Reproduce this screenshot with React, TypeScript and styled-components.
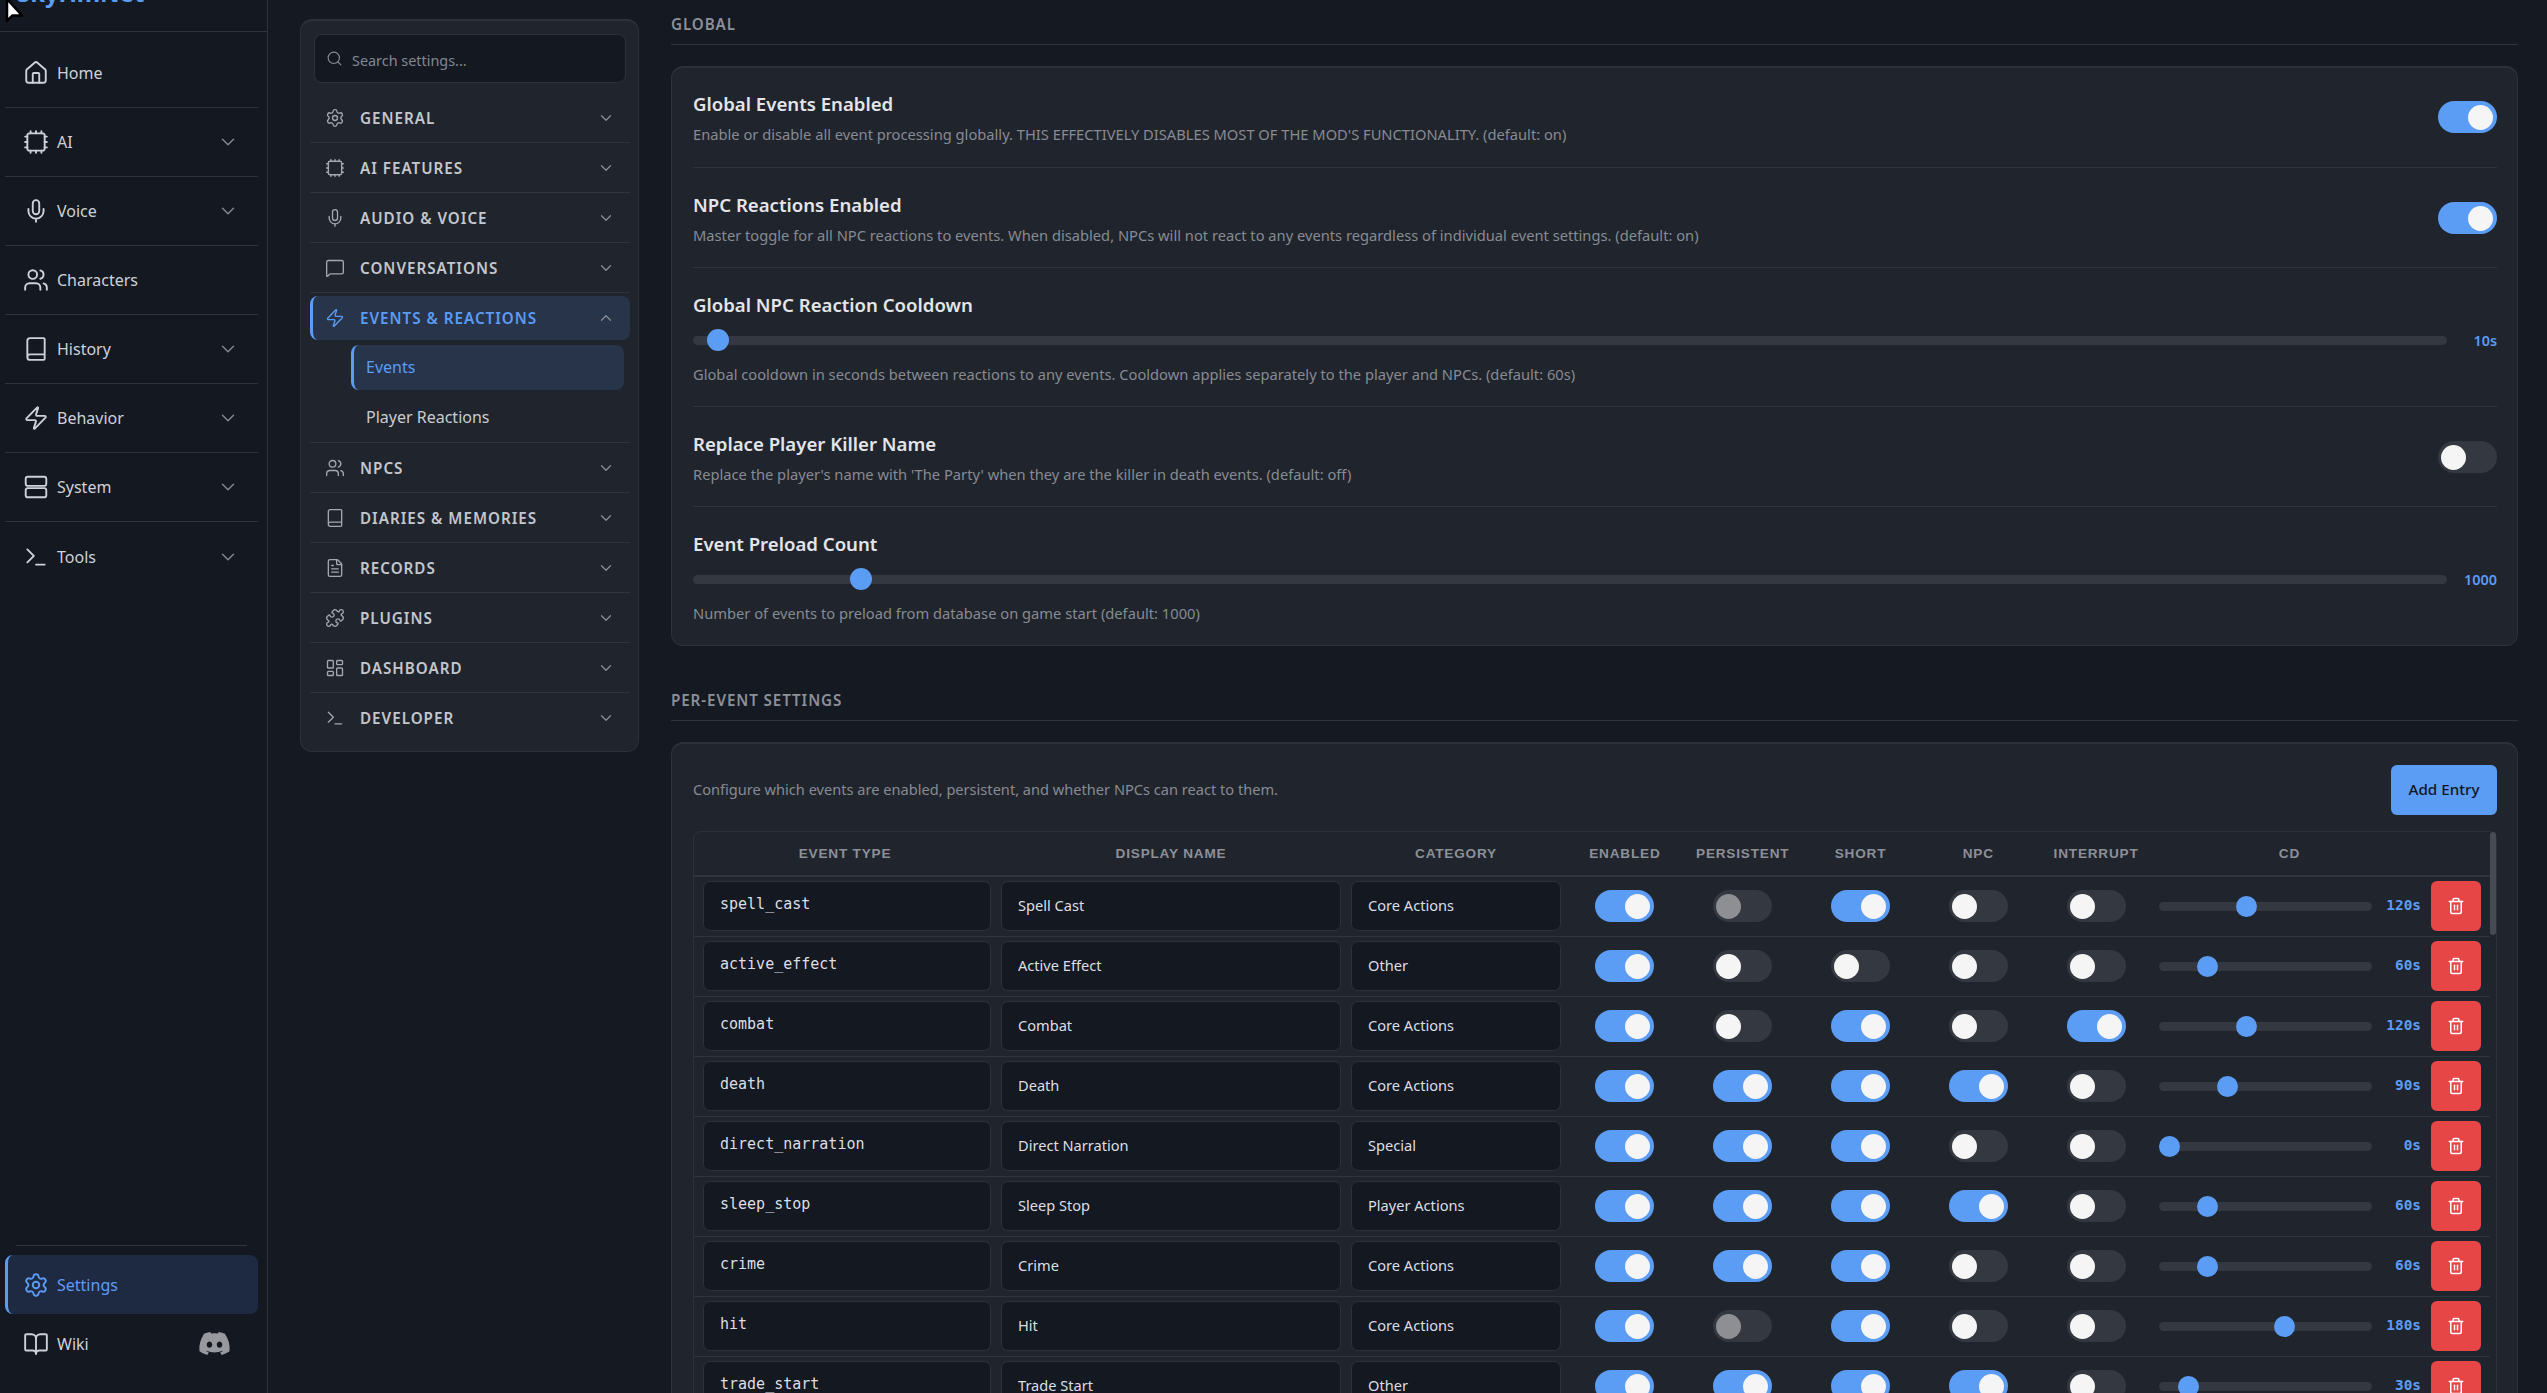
import React from "react";
import styled, { createGlobalStyle } from "styled-components";
import {
  House, Mic, Users, Book, Zap, Terminal, ChevronDown, ChevronUp, Settings, BookOpen, Search,
  MessageSquare, FileText, Puzzle, LayoutDashboard, Trash2,
} from "lucide-react";
import { FaDiscord } from "react-icons/fa";

const SANS = `"Noto Sans", "Open Sans", sans-serif`;
const MONO = `"DejaVu Sans Mono", monospace`;
const BLUE = "#5b9cf5";

const Global = createGlobalStyle`
  html, body { margin: 0; height: 100%; overflow: hidden; background: #141922; }
  * { box-sizing: border-box; }
  #root { height: 100%; }
`;

const Shell = styled.div`
  display: grid;
  grid-template-columns: 268px 1fr;
  height: 100vh;
  overflow: hidden;
  background: #141922;
  font-family: ${SANS};
  color: #d8dbe1;
`;

const Side = styled.aside`
  position: relative;
  display: flex;
  flex-direction: column;
  background: #131821;
  border-right: 1px solid #30343c;
  height: 100%;
`;

const Brand = styled.div`
  height: 32px;
  overflow: hidden;
  border-bottom: 1px solid #30343c;
  padding-left: 17px;
`;

const BrandText = styled.div`
  margin-top: -26px;
  font-size: 24px;
  line-height: 38px;
  font-weight: 700;
  color: ${BLUE};
`;

const Pointer = styled.svg`
  position: absolute;
  left: 4px;
  top: -2px;
  z-index: 5;
`;

const Nav = styled.nav`
  flex: 1;
  padding: 7px 9px 0 5px;
`;

const NavRow = styled.div`
  height: 69px;
  display: flex;
  align-items: center;
  padding-left: 18px;
  gap: 8px;
  font-size: 16px;
  color: #ced1d8;
  border-bottom: 1px solid #30343c;
  &:last-child { border-bottom: none; }
  & > svg { flex: none; }
`;

const NavChevron = styled.span`
  margin-left: auto;
  margin-right: 19px;
  display: flex;
  color: #83878f;
`;

const SideFoot = styled.div`
  padding: 0 9px 20px 5px;
`;

const FootRule = styled.div`
  height: 1px;
  background: #30343c;
  margin: 0 11px 9px;
`;

const SettingsLink = styled.div`
  height: 59px;
  display: flex;
  align-items: center;
  gap: 8px;
  padding-left: 15px;
  font-size: 16px;
  color: ${BLUE};
  background: #1e2a42;
  border-left: 3px solid ${BLUE};
  border-radius: 8px;
`;

const WikiRow = styled.div`
  height: 59px;
  display: flex;
  align-items: center;
  gap: 8px;
  padding: 0 27px 0 18px;
  font-size: 16px;
  color: #ced1d8;
  & > svg:last-child { margin-left: auto; color: #97999e; }
`;

const Main = styled.main`
  display: flex;
  align-items: flex-start;
  gap: 32px;
  padding: 19px 29px 0 32px;
  min-width: 0;
  height: 100%;
  overflow: hidden;
`;

const Panel = styled.div`
  flex: none;
  width: 339px;
  background: #20242c;
  border: 1px solid #2d3139;
  border-top-width: 2px;
  border-radius: 12px;
  padding: 13px 8px 9px 9px;
`;

const SearchBox = styled.label`
  display: flex;
  align-items: center;
  gap: 9px;
  height: 49px;
  margin: 0 4px 10px;
  padding: 0 11px;
  background: #141821;
  border: 1px solid #2d3139;
  border-radius: 8px;
  color: #8a8e96;
`;

const SearchInput = styled.input`
  flex: 1;
  min-width: 0;
  padding: 3px 0 0;
  background: none;
  border: none;
  outline: none;
  font: 14.4px ${SANS};
  color: #d8dbe1;
  &::placeholder { color: #83878f; opacity: 1; }
`;

const Group = styled.div`
  padding: 3px 0 2px;
  border-bottom: 1px solid #30343c;
  &:last-child { border-bottom: none; }
`;

const GroupHead = styled.div<{ $active?: boolean }>`
  height: 44px;
  display: flex;
  align-items: center;
  gap: 15px;
  padding: 0 15px;
  border-radius: 8px;
  font-size: 15.2px;
  font-weight: 600;
  letter-spacing: 1px;
  color: ${(p) => (p.$active ? BLUE : "#c4c7cd")};
  background: ${(p) => (p.$active ? "#27344a" : "transparent")};
  border-left: ${(p) => (p.$active ? `3px solid ${BLUE}` : "none")};
  padding-left: ${(p) => (p.$active ? "12px" : "15px")};
  & > svg { flex: none; color: ${(p) => (p.$active ? BLUE : "#a4a7ae")}; }
`;

const GroupChevron = styled.span`
  margin-left: auto;
  display: flex;
  color: #8c9098;
`;

const SubList = styled.div`
  display: flex;
  flex-direction: column;
  gap: 5px;
  margin: 5px 6px 0 41px;
`;

const SubItem = styled.div<{ $active?: boolean }>`
  height: 45px;
  display: flex;
  align-items: center;
  padding-bottom: 1px;
  padding-left: ${(p) => (p.$active ? "12px" : "15px")};
  font-size: 16px;
  border-radius: 8px;
  color: ${(p) => (p.$active ? BLUE : "#c9ccd2")};
  background: ${(p) => (p.$active ? "#27344a" : "transparent")};
  border-left: ${(p) => (p.$active ? `3px solid ${BLUE}` : "none")};
`;

const Content = styled.div`
  flex: 1;
  min-width: 0;
  margin-top: -5px;
`;

const SectionTitle = styled.h2<{ $gap?: boolean }>`
  margin: ${(p) => (p.$gap ? "44px" : "0")} 0 21px;
  height: 31px;
  padding-bottom: 10px;
  line-height: 20px;
  font-size: 15.2px;
  font-weight: 600;
  letter-spacing: 0.9px;
  color: #8c9098;
  border-bottom: 1px solid #30343c;
`;

const Card = styled.section`
  background: #20242c;
  border: 1px solid #2d3139;
  border-top-width: 2px;
  border-radius: 12px;
  padding: 0 20px 0 21px;
`;

const SettingRow = styled.div`
  padding: 22px 0 19px;
  border-bottom: 1px solid #2f333b;
  &:first-child { padding: 21px 0 20px; }
  &:last-child { border-bottom: none; }
`;

const ToggleRow = styled(SettingRow)`
  display: flex;
  align-items: center;
  justify-content: space-between;
  & > button { margin-bottom: 2px; }
`;

const SettingTitle = styled.div`
  font-size: 18.6px;
  line-height: 30px;
  font-weight: 600;
  color: #e3e5ea;
`;

const SettingDesc = styled.div<{ $afterSlider?: boolean }>`
  margin-top: ${(p) => (p.$afterSlider ? "11px" : "3px")};
  padding-bottom: 1px;
  font-size: 14.7px;
  line-height: 24px;
  color: #878b93;
`;

const SliderLine = styled.div`
  display: flex;
  align-items: center;
  margin-top: 9px;
  height: 22px;
`;

const SliderValue = styled.span`
  flex: none;
  width: 50px;
  text-align: right;
  font-size: 14.4px;
  font-weight: 600;
  color: ${BLUE};
`;

const Range = styled.input<{ $size: number }>`
  flex: 1;
  min-width: 0;
  margin: 0;
  height: ${(p) => p.$size}px;
  appearance: none;
  background: transparent;
  &::-webkit-slider-runnable-track {
    height: 9px;
    border-radius: 5px;
    background: #343841;
  }
  &::-webkit-slider-thumb {
    appearance: none;
    width: ${(p) => p.$size}px;
    height: ${(p) => p.$size}px;
    margin-top: ${(p) => (9 - p.$size) / 2}px;
    border-radius: 50%;
    background: ${BLUE};
    border: none;
  }
`;

const Track = styled.button<{ $on: boolean }>`
  flex: none;
  width: 59px;
  height: 32px;
  padding: 0 4px 0 3px;
  display: flex;
  align-items: center;
  justify-content: ${(p) => (p.$on ? "flex-end" : "flex-start")};
  border: none;
  border-radius: 16px;
  background: ${(p) => (p.$on ? BLUE : "#343841")};
`;

const Knob = styled.span<{ $off?: boolean }>`
  display: block;
  width: 25px;
  height: 25px;
  border-radius: 50%;
  background: ${(p) => (p.$off ? "#8e8f93" : "#f5f5f5")};
`;

const Toolbar = styled.div`
  display: flex;
  align-items: center;
  justify-content: space-between;
  margin-top: 21px;
`;

const ToolbarText = styled.span`
  font-size: 14.6px;
  color: #878b93;
  padding-bottom: 2px;
`;

const AddButton = styled.button`
  width: 106px;
  height: 50px;
  border: none;
  border-radius: 6px;
  background: ${BLUE};
  color: #101722;
  font: 500 15.2px ${SANS};
  padding: 0 0 2px;
`;

const Table = styled.div`
  position: relative;
  margin-top: 16px;
  border: 1px solid #2d3139;
  border-radius: 8px 8px 0 0;
  padding-right: 6px;
`;

const ScrollThumb = styled.div`
  position: absolute;
  top: 0;
  right: 0;
  width: 6px;
  height: 103px;
  border-radius: 3px;
  background: #474b54;
`;

const COLUMNS = "302px 350px 220px repeat(5, 117.8px) 269px 66px";

const HeadRow = styled.div`
  display: grid;
  grid-template-columns: ${COLUMNS};
  align-items: center;
  height: 45px;
  border-bottom: 2px solid #30343c;
`;

const HeadCell = styled.div`
  text-align: center;
  font: 700 13.6px "Liberation Sans", Arial, sans-serif;
  letter-spacing: 0.8px;
  color: #8c9098;
`;

const BodyRow = styled.div`
  display: grid;
  grid-template-columns: ${COLUMNS};
  height: 60px;
  padding: 4px 0 5px;
  border-bottom: 1px solid #30343c;
`;

const FieldCell = styled.div<{ $first?: boolean }>`
  padding: 0 5px 0 ${(p) => (p.$first ? "9px" : "5px")};
`;

const Field = styled.input<{ $mono?: boolean }>`
  display: block;
  width: 100%;
  height: 50px;
  padding: ${(p) => (p.$mono ? "0 16px 4px" : "0 16px 2px")};
  background: #141821;
  border: 1px solid #2d3139;
  border-radius: 7px;
  outline: none;
  color: #dcdfe4;
  font-family: ${(p) => (p.$mono ? MONO : SANS)};
  font-size: ${(p) => (p.$mono ? "15px" : "14.6px")};
`;

const SwitchCell = styled.div`
  display: flex;
  align-items: center;
  justify-content: center;
`;

const CdCell = styled.div`
  display: flex;
  align-items: center;
  padding: 0 3px 0 4px;
`;

const CdValue = styled.span`
  flex: none;
  width: 49px;
  text-align: right;
  padding-bottom: 2px;
  font: 700 14.4px ${MONO};
  color: ${BLUE};
`;

const ActionCell = styled.div`
  padding-left: 7px;
`;

const DeleteButton = styled.button`
  display: flex;
  align-items: center;
  justify-content: center;
  width: 50px;
  height: 50px;
  border: none;
  border-radius: 6px;
  background: #e74646;
  color: #fff;
`;

const CpuIcon = ({ size }: { size: number }) => (
  <svg width={size} height={size} viewBox="0 0 24 24" fill="none" stroke="currentColor" strokeWidth="1.75" strokeLinecap="round" strokeLinejoin="round">
    <rect x="4" y="4" width="16" height="16" rx="2" />
    <path d="M12 20v2M12 2v2M17 20v2M17 2v2M2 12h2M2 17h2M2 7h2M20 12h2M20 17h2M20 7h2M7 20v2M7 2v2" />
  </svg>
);

const ServerIcon = ({ size }: { size: number }) => (
  <svg width={size} height={size} viewBox="0 0 24 24" fill="none" stroke="currentColor" strokeWidth="1.75" strokeLinecap="round" strokeLinejoin="round">
    <rect x="2.5" y="2.5" width="19" height="8.5" rx="2" />
    <rect x="2.5" y="13" width="19" height="8.5" rx="2" />
  </svg>
);

const Toggle = ({ state }: { state: string }) => (
  <Track $on={state === "1"} role="switch" aria-checked={state === "1"} aria-label="toggle">
    <Knob $off={state === "d"} />
  </Track>
);

const ICON = { size: 26, strokeWidth: 1.75 };
const navItems: [string, React.ReactNode, boolean][] = [
  ["Home", <House {...ICON} />, false],
  ["AI", <CpuIcon size={26} />, true],
  ["Voice", <Mic {...ICON} />, true],
  ["Characters", <Users {...ICON} />, false],
  ["History", <Book {...ICON} />, true],
  ["Behavior", <Zap {...ICON} />, true],
  ["System", <ServerIcon size={26} />, true],
  ["Tools", <Terminal {...ICON} />, true],
];

const SM = { size: 20, strokeWidth: 1.6 };
const before: [string, React.ReactNode][] = [
  ["GENERAL", <Settings {...SM} />],
  ["AI FEATURES", <CpuIcon size={20} />],
  ["AUDIO & VOICE", <Mic {...SM} />],
  ["CONVERSATIONS", <MessageSquare {...SM} />],
];
const after: [string, React.ReactNode][] = [
  ["NPCS", <Users {...SM} />],
  ["DIARIES & MEMORIES", <Book {...SM} />],
  ["RECORDS", <FileText {...SM} />],
  ["PLUGINS", <Puzzle {...SM} />],
  ["DASHBOARD", <LayoutDashboard {...SM} />],
  ["DEVELOPER", <Terminal {...SM} />],
];

// flags, one per switch: enabled, persistent, short, npc, interrupt (d = off and greyed)
const events: [string, string, string, string, number][] = [
  ["spell_cast", "Spell Cast", "Core Actions", "1d100", 120],
  ["active_effect", "Active Effect", "Other", "10000", 60],
  ["combat", "Combat", "Core Actions", "10101", 120],
  ["death", "Death", "Core Actions", "11110", 90],
  ["direct_narration", "Direct Narration", "Special", "11100", 0],
  ["sleep_stop", "Sleep Stop", "Player Actions", "11110", 60],
  ["crime", "Crime", "Core Actions", "11100", 60],
  ["hit", "Hit", "Core Actions", "1d100", 180],
  ["trade_start", "Trade Start", "Other", "11110", 30],
];

const heads = ["EVENT TYPE", "DISPLAY NAME", "CATEGORY", "ENABLED", "PERSISTENT", "SHORT", "NPC", "INTERRUPT", "CD", ""];

const GroupRow = ({ label, icon }: { label: string; icon: React.ReactNode }) => (
  <Group>
    <GroupHead>
      {icon}
      {label}
      <GroupChevron><ChevronDown size={18} strokeWidth={1.6} /></GroupChevron>
    </GroupHead>
  </Group>
);

export default function App() {
  return (
    <Shell>
      <Global />
      <Side>
        <Pointer width="22" height="30" viewBox="0 0 22 30">
          <path d="M3 1v22l5.5-5.5H18z" fill="#fff" stroke="#000" strokeWidth="2.5" strokeLinejoin="round" />
        </Pointer>
        <Brand><BrandText>SkyrimNet</BrandText></Brand>
        <Nav>
          {navItems.map(([label, icon, chevron]) => (
            <NavRow key={label}>
              {icon}
              {label}
              {chevron && <NavChevron><ChevronDown size={22} strokeWidth={1.6} /></NavChevron>}
            </NavRow>
          ))}
        </Nav>
        <SideFoot>
          <FootRule />
          <SettingsLink><Settings {...ICON} />Settings</SettingsLink>
          <WikiRow><BookOpen {...ICON} />Wiki<FaDiscord size={33} /></WikiRow>
        </SideFoot>
      </Side>
      <Main>
        <Panel>
          <SearchBox>
            <Search size={17} strokeWidth={1.6} />
            <SearchInput placeholder="Search settings..." />
          </SearchBox>
          {before.map(([l, i]) => <GroupRow key={l} label={l} icon={i} />)}
          <Group>
            <GroupHead $active>
              <Zap {...SM} />
              EVENTS &amp; REACTIONS
              <GroupChevron><ChevronUp size={18} strokeWidth={1.6} /></GroupChevron>
            </GroupHead>
            <SubList>
              <SubItem $active>Events</SubItem>
              <SubItem>Player Reactions</SubItem>
            </SubList>
          </Group>
          {after.map(([l, i]) => <GroupRow key={l} label={l} icon={i} />)}
        </Panel>
        <Content>
          <SectionTitle>GLOBAL</SectionTitle>
          <Card>
            <ToggleRow>
              <div>
                <SettingTitle>Global Events Enabled</SettingTitle>
                <SettingDesc>Enable or disable all event processing globally. THIS EFFECTIVELY DISABLES MOST OF THE MOD'S FUNCTIONALITY. (default: on)</SettingDesc>
              </div>
              <Toggle state="1" />
            </ToggleRow>
            <ToggleRow>
              <div>
                <SettingTitle>NPC Reactions Enabled</SettingTitle>
                <SettingDesc>Master toggle for all NPC reactions to events. When disabled, NPCs will not react to any events regardless of individual event settings. (default: on)</SettingDesc>
              </div>
              <Toggle state="1" />
            </ToggleRow>
            <SettingRow>
              <SettingTitle>Global NPC Reaction Cooldown</SettingTitle>
              <SliderLine>
                <Range $size={22} type="range" min={0} max={1200} defaultValue={10} aria-label="Global NPC Reaction Cooldown" />
                <SliderValue>10s</SliderValue>
              </SliderLine>
              <SettingDesc $afterSlider>Global cooldown in seconds between reactions to any events. Cooldown applies separately to the player and NPCs. (default: 60s)</SettingDesc>
            </SettingRow>
            <ToggleRow>
              <div>
                <SettingTitle>Replace Player Killer Name</SettingTitle>
                <SettingDesc>Replace the player's name with 'The Party' when they are the killer in death events. (default: off)</SettingDesc>
              </div>
              <Toggle state="0" />
            </ToggleRow>
            <SettingRow>
              <SettingTitle>Event Preload Count</SettingTitle>
              <SliderLine>
                <Range $size={22} type="range" min={100} max={10000} defaultValue={1000} aria-label="Event Preload Count" />
                <SliderValue>1000</SliderValue>
              </SliderLine>
              <SettingDesc $afterSlider>Number of events to preload from database on game start (default: 1000)</SettingDesc>
            </SettingRow>
          </Card>
          <SectionTitle $gap>PER-EVENT SETTINGS</SectionTitle>
          <Card>
            <Toolbar>
              <ToolbarText>Configure which events are enabled, persistent, and whether NPCs can react to them.</ToolbarText>
              <AddButton>Add Entry</AddButton>
            </Toolbar>
            <Table>
              <ScrollThumb />
              <HeadRow>
                {heads.map((h, i) => <HeadCell key={i}>{h}</HeadCell>)}
              </HeadRow>
              {events.map(([type, name, cat, flags, cd]) => (
                <BodyRow key={type}>
                  <FieldCell $first><Field $mono readOnly value={type} /></FieldCell>
                  <FieldCell><Field readOnly value={name} /></FieldCell>
                  <FieldCell><Field readOnly value={cat} /></FieldCell>
                  {flags.split("").map((f, i) => (
                    <SwitchCell key={i}><Toggle state={f} /></SwitchCell>
                  ))}
                  <CdCell>
                    <Range $size={21} type="range" min={0} max={300} defaultValue={cd} aria-label={`${type} cooldown`} />
                    <CdValue>{cd}s</CdValue>
                  </CdCell>
                  <ActionCell>
                    <DeleteButton aria-label={`Delete ${type}`}><Trash2 size={18} strokeWidth={2} /></DeleteButton>
                  </ActionCell>
                </BodyRow>
              ))}
            </Table>
          </Card>
        </Content>
      </Main>
    </Shell>
  );
}
